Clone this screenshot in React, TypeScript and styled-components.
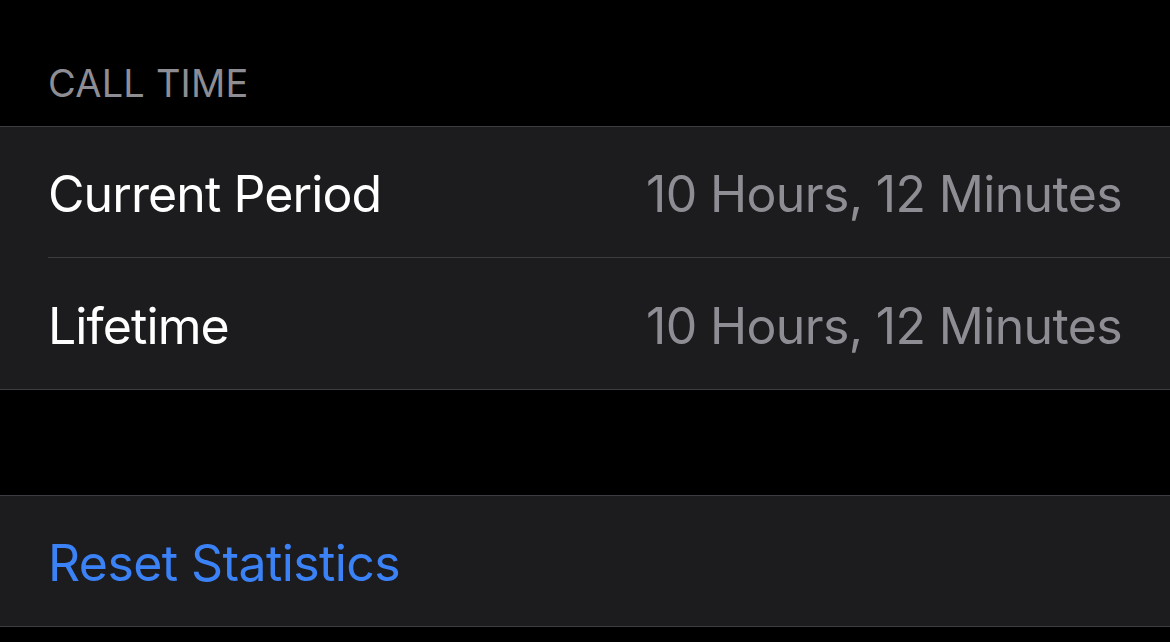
import React, { FC } from "react";
import styled, { createGlobalStyle } from "styled-components";

const GlobalStyle = createGlobalStyle`
  html, body {
    margin: 0;
    padding: 0;
    background: #000000;
  }
  body {
    font-family: Inter, "Noto Sans", sans-serif;
    -webkit-font-smoothing: antialiased;
  }
`;

const Page = styled.div`
  width: 1170px;
  height: 642px;
  background: #000000;
  overflow: hidden;
`;

const SectionHeader = styled.div`
  height: 126px;
  box-sizing: border-box;
  display: flex;
  align-items: flex-end;
  padding: 0 48px 24px;
  color: #8d8d93;
  font-size: 38px;
  line-height: 1;
  letter-spacing: 0.2px;
`;

const Group = styled.div<{ $gapBefore?: number }>`
  margin-top: ${(p) => p.$gapBefore ?? 0}px;
  background: #1c1c1e;
  border-top: 1px solid #3d3d41;
  border-bottom: 1px solid #3d3d41;
`;

const Row = styled.div<{ $height?: number }>`
  height: ${(p) => p.$height ?? 130}px;
  box-sizing: border-box;
  display: flex;
  align-items: center;
  justify-content: space-between;
  padding: 4px 48px 0 48px;
  font-size: 50px;
`;

const Label = styled.span<{ $tint?: boolean }>`
  color: ${(p) => (p.$tint ? "#3b82f6" : "#ffffff")};
  letter-spacing: ${(p) => (p.$tint ? "-0.6px" : "-0.9px")};
`;

const Value = styled.span`
  color: #8d8d93;
  letter-spacing: -0.65px;
`;

const Separator = styled.div`
  height: 1px;
  margin-left: 48px;
  background: #3d3d41;
`;

const rows = [
  { label: "Current Period", value: "10 Hours, 12 Minutes" },
  { label: "Lifetime", value: "10 Hours, 12 Minutes" },
];

const App: FC = () => {
  return (
    <Page>
      <GlobalStyle />
      <SectionHeader>CALL TIME</SectionHeader>
      <Group>
        {rows.map((row, i) => (
          <React.Fragment key={row.label}>
            {i > 0 && <Separator />}
            <Row $height={i === rows.length - 1 ? 131 : 130}>
              <Label>{row.label}</Label>
              <Value>{row.value}</Value>
            </Row>
          </React.Fragment>
        ))}
      </Group>
      <Group $gapBefore={105}>
        <Row>
          <Label $tint>Reset Statistics</Label>
        </Row>
      </Group>
    </Page>
  );
};

export default App;
